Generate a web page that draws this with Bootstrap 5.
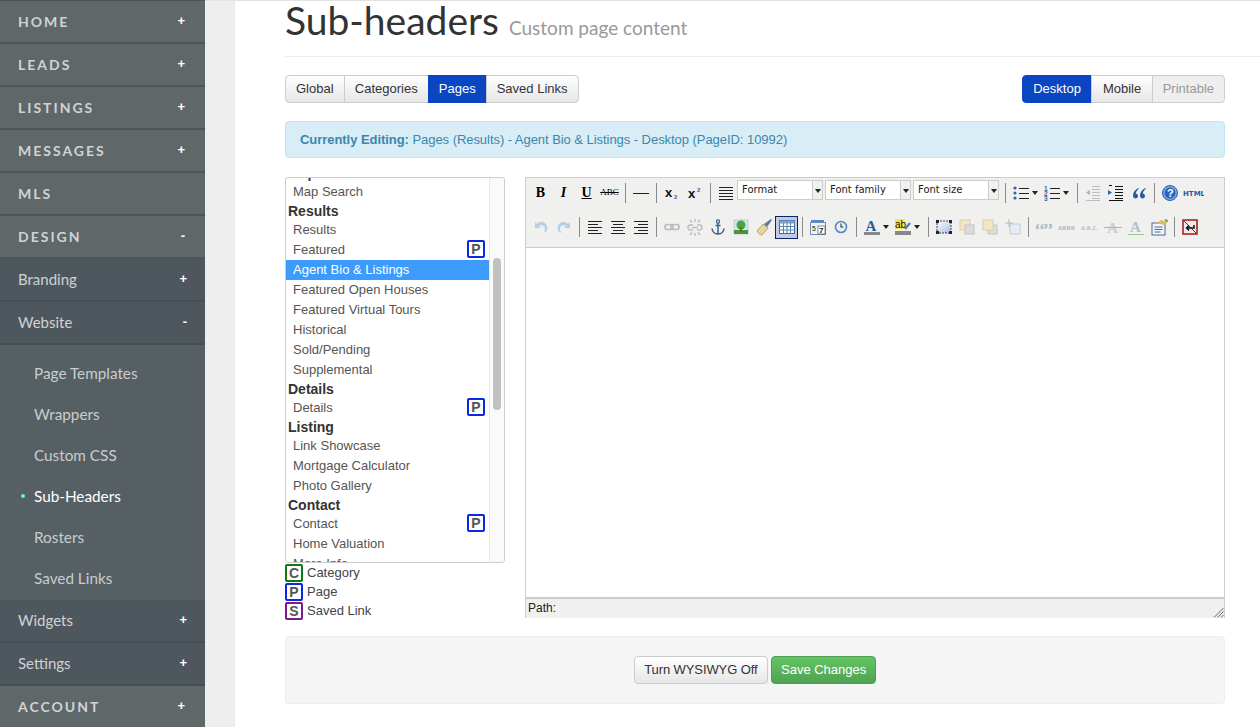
<!DOCTYPE html>
<html lang="en">
<head>
<meta charset="utf-8">
<title>Sub-headers</title>
<link href="https://cdn.jsdelivr.net/npm/bootstrap@5.3.0/dist/css/bootstrap.min.css" rel="stylesheet">
<style>
html,body{height:727px;overflow:hidden;background:#fff;}
body{font-family:"Liberation Sans",Arial,sans-serif;font-size:13px;color:#333;}
.shell{height:727px;border-top:1px solid #e3e3e3;}
.side{width:205px;flex:none;font-family:Lato,sans-serif;background:#566064;border-top:1px solid #4b5357;margin-top:-1px;}
.gutter{width:30px;flex:none;background:#eee;border-right:1px solid #e8e8e8;}
.main{flex:1 1 auto;min-width:0;padding-left:50px;}
.navtop,.navsub{height:43px;display:flex;align-items:center;justify-content:space-between;padding:0 18px;border-bottom:2px solid #4d5559;}
.navtop{background:#5f6769;color:#d0d3d4;font-weight:700;font-size:14px;letter-spacing:2px;padding-right:20px;}
.navsub{background:#4f575e;color:#cfd2d4;font-size:15px;border-bottom-color:#474e54;padding-right:18px;}
.navlast{height:41px;border-bottom:0;}
.navtop b,.navsub b{color:#fff;font-size:13px;font-weight:700;letter-spacing:0;font-family:"Liberation Sans",sans-serif;margin-top:-2px;}
.subwrap{height:255px;padding-top:8px;}
.subitem{height:41px;display:flex;align-items:center;padding-left:34px;color:#c9cdce;font-size:15.300px;position:relative;}
.subitem.on{color:#fff;}
.subitem.on::before{content:"";position:absolute;left:21px;top:18px;width:4px;height:4px;border-radius:50%;background:#5ff0f0;}
.pagehead{height:56px;border-bottom:1px solid #eee;display:flex;align-items:baseline;gap:10px;}
.pagehead h1{font-family:Lato,sans-serif;font-weight:400;font-size:39px;margin:0;line-height:39px;color:#333;}
.pagehead span{font-family:Lato,sans-serif;font-size:19px;color:#999;}
.content{padding-right:35px;}
.tabbar{margin-top:18px;}
.btn-x{font-size:13px;line-height:18px;padding:4px 10px;color:#333;background:linear-gradient(#fff,#e6e6e6);border:1px solid #ccc;border-radius:4px;height:28px;}
.btn-x:hover{color:#333;border-color:#ccc;}
.btn-x.sel{background:#0a46c2;border-color:#0a46c2;color:#fff;}
.btn-x.sel:hover{color:#fff;background:#0a46c2;border-color:#0a46c2;}
.btn-x.off{background:#eee;color:#999;opacity:1;}
.btn-x.roomy{padding-left:10.500px;padding-right:10.500px;}
.btn-x.cats{padding-left:10.200px;padding-right:10.200px;}
.btn-x.tight{padding-left:9.500px;padding-right:9.500px;letter-spacing:-.1px;}
.infobar{margin:18px 0 19px;height:37px;padding:0 14px;display:flex;align-items:center;background:#d9edf7;border:1px solid #bce8f1;border-radius:4px;color:#3a87ad;letter-spacing:-.05px;}
.workrow{gap:20px;}
.listcol{width:220px;flex:none;}
.listbox{height:386px;border:1px solid #ccc;border-radius:3px;position:relative;overflow:hidden;background:#fff;}
.listin{margin-top:-14px;width:204px;color:#555;}
.optg{height:18px;line-height:18px;font-size:14px;font-weight:700;color:#333;padding-left:2px;}
.opt{height:20px;line-height:20px;padding:0 5px 0 7px;display:flex;justify-content:space-between;align-items:center;}
.opt .tag{margin-bottom:2px;}
.opt.hit{background:#3d9bfc;color:#fff;}
.sbar{position:absolute;right:0;top:0;bottom:0;width:15px;background:#fafafa;border-left:1px solid #e8e8e8;}
.sthumb{position:absolute;left:3px;top:80px;width:8px;height:152px;border-radius:4px;background:#c1c1c1;}
.tag{width:18px;height:18px;flex:none;border:2px solid #0a28e6;border-radius:2px;font-size:14px;font-weight:700;line-height:14px;text-align:center;color:#555;}
.tag.tc{border-color:#0a7a12;}
.tag.tsv{border-color:#7a1a8c;}
.legend{height:19px;display:flex;gap:4px;align-items:center;color:#444;}
.editor{flex:1 1 auto;min-width:0;height:441px;border:1px solid #ccc;border-bottom:0;display:flex;flex-direction:column;}
.tbar{height:70px;flex:none;background:#f0f0ee;border-bottom:1px solid #ccc;padding-left:3px;}
.trow{height:29px;display:flex;align-items:center;}
.trow.second{height:40px;}
.ti{width:23px;height:22px;display:flex;align-items:center;justify-content:center;flex:none;}
.ti svg{display:block;}
.ti.act{width:23px;height:23px;background:#c2cbe0;border:1px solid #0a246a;}
.tsep{width:8px;height:20px;flex:none;display:flex;justify-content:center;}
.tsep.far{margin-left:2px;}
.tsep::before{content:"";width:1px;background:#8a8a8a;}
.tarr{width:8px;flex:none;display:flex;justify-content:center;margin-left:-1px;margin-right:1px;}
.tarr::before{content:"";border:3px solid transparent;border-top:4px solid #222;margin-top:3px;}
.tsel{width:86px;height:20px;flex:none;margin-right:2px;margin-bottom:6px;display:flex;border:1px solid #ccc;background:#fff;line-height:18px;padding-left:4px;color:#222;justify-content:space-between;font-family:"DejaVu Sans",sans-serif;font-size:10px;}
.tsel i{width:10px;background:#f0f0ee;border-left:1px solid #ccc;position:relative;flex:none;}
.tsel i::after{content:"";position:absolute;left:2px;top:8px;border:3px solid transparent;border-top:4px solid #222;}
.glyph{font-family:"Liberation Serif",serif;font-weight:700;font-size:14px;line-height:1;color:#000;}
.glyph.it{font-style:italic;}
.glyph.un{text-decoration:underline;}
.glyph.sm{font-size:9px;font-weight:400;text-decoration:line-through;}
.editarea{flex:1 1 auto;background:#fff;}
.statusbar{height:21px;flex:none;background:#f0f0ee;border-top:2px solid #ccc;font-size:12px;line-height:18px;padding-left:2px;color:#222;position:relative;}
.grip{position:absolute;right:0;bottom:0;}
.footwell{margin-top:16px;height:68px;background:#f5f5f5;border:1px solid #eee;border-radius:4px;display:flex;align-items:center;justify-content:center;gap:3px;}
.btn-save{font-size:13px;line-height:18px;padding:4px 9px;height:28px;color:#fff;background:linear-gradient(#62c462,#51a351);border:1px solid #4f9e4f;border-radius:4px;}
.btn-save:hover{color:#fff;}
</style>
</head>
<body>
<svg width="0" height="0" class="position-absolute">
<defs>
<symbol id="i-just" viewBox="0 0 20 20"><path d="M3 4.500h14M3 7.500h14M3 10.500h14M3 13.500h14M3 16.500h14" stroke="#222" fill="none"/></symbol>
<symbol id="i-left" viewBox="0 0 20 20"><path d="M3 4.500h14M3 7.500h10M3 10.500h14M3 13.500h10M3 16.500h14" stroke="#222" fill="none"/></symbol>
<symbol id="i-center" viewBox="0 0 20 20"><path d="M3 4.500h14M5 7.500h10M3 10.500h14M5 13.500h10M3 16.500h14" stroke="#222" fill="none"/></symbol>
<symbol id="i-right" viewBox="0 0 20 20"><path d="M3 4.500h14M7 7.500h10M3 10.500h14M7 13.500h10M3 16.500h14" stroke="#222" fill="none"/></symbol>
<symbol id="i-undo" viewBox="0 0 20 20"><path d="M4 5v6h6L8 9c3-2 6 0 6 3 0 2-1 3-2 4 4-1 5-4 4-7-1-4-7-6-10-2z" fill="#b9cde6"/></symbol>
<symbol id="i-redo" viewBox="0 0 20 20"><path d="M16 5v6h-6l2-2c-3-2-6 0-6 3 0 2 1 3 2 4-4-1-5-4-4-7 1-4 7-6 10-2z" fill="#b9cde6"/></symbol>
<symbol id="i-link" viewBox="0 0 20 20"><rect x="3" y="7.500" width="8" height="5" rx="2.500" fill="none" stroke="#b4bcc4" stroke-width="1.600"/><rect x="9" y="7.500" width="8" height="5" rx="2.500" fill="none" stroke="#b4bcc4" stroke-width="1.600"/></symbol>
<symbol id="i-unlink" viewBox="0 0 20 20"><path d="M8 8H5.500a2.500 2.500 0 0 0 0 5H8M12 8h2.500a2.500 2.500 0 0 1 0 5H12M7 10.500h6M10 2v3M10 16v3M5 3l2 2.500M15 3l-2 2.500M5 18l2-2.500M15 18l-2-2.500" fill="none" stroke="#b4bcc4" stroke-width="1.400"/></symbol>
<symbol id="i-anchor" viewBox="0 0 20 20"><circle cx="10" cy="4.500" r="1.600" fill="none" stroke="#3a6288" stroke-width="1.200"/><path d="M10 6v11M7.500 8.500h5M4 11.500c.5 3.500 3 5.500 6 5.500s5.500-2 6-5.500" fill="none" stroke="#3a6288" stroke-width="1.500"/></symbol>
<symbol id="i-img" viewBox="0 0 20 20"><rect x="3" y="3" width="14" height="14" fill="#cfe8f8" stroke="#9ab" stroke-width=".5"/><rect x="3" y="13" width="14" height="4" fill="#3f9a3a"/><circle cx="10" cy="8" r="4.500" fill="#4aa53e"/><rect x="9.200" y="10" width="1.600" height="5" fill="#8a5020"/><circle cx="7" cy="14.500" r="1" fill="#e05a4a"/></symbol>
<symbol id="i-clean" viewBox="0 0 20 20"><path d="M3 14l6-7 5 4-6 7c-2 0-4-2-5-4z" fill="#e8d79a" stroke="#a08a4a" stroke-width=".7"/><path d="M10 7l7-5 1 1-5 7z" fill="#5a7aa0"/></symbol>
<symbol id="i-table" viewBox="0 0 20 20"><rect x="2.500" y="3.500" width="15" height="13" fill="#fff" stroke="#3f6aa0"/><rect x="2.500" y="3.500" width="15" height="3" fill="#7f9fc8"/><path d="M2.500 9.500h15M2.500 13h15M6.500 6v10M10 6v10M13.500 6v10" stroke="#5a84b8" fill="none"/></symbol>
<symbol id="i-date" viewBox="0 0 20 20"><rect x="3" y="3" width="13" height="4" fill="#5b87c0"/><rect x="2.500" y="5.500" width="15" height="12" fill="#eef3fa" stroke="#6a8fbd"/><rect x="10" y="9" width="7" height="8" fill="#fff" stroke="#444" stroke-width=".6"/><text x="11" y="16" font-size="8" font-weight="700" fill="#222" font-family="Liberation Sans">7</text><text x="4" y="14" font-size="7" fill="#222" font-family="Liberation Sans">5</text></symbol>
<symbol id="i-time" viewBox="0 0 20 20"><circle cx="10" cy="10" r="5.500" fill="#e8f0fa" stroke="#5a86bc" stroke-width="1.600"/><path d="M10 6.500v3.500h2.500" fill="none" stroke="#334" stroke-width="1.100"/></symbol>
<symbol id="i-box" viewBox="0 0 20 20"><defs><linearGradient id="g1" x1="0" y1="0" x2="1" y2="1"><stop offset="0" stop-color="#fff"/><stop offset="1" stop-color="#a8bde0"/></linearGradient></defs><rect x="3" y="4" width="14" height="12" fill="url(#g1)" stroke="#345" stroke-dasharray="2 1"/><path d="M2 3h3v3H2zM15 3h3v3h-3zM2 14h3v3H2zM15 14h3v3h-3z" fill="#223"/></symbol>
<symbol id="i-layer" viewBox="0 0 20 20"><rect x="3" y="3" width="10" height="10" fill="#f2e7c4" stroke="#d8cda8"/><rect x="8" y="8" width="9" height="9" fill="#dcdcdc" stroke="#c4c4c4"/></symbol>
<symbol id="i-layer2" viewBox="0 0 20 20"><rect x="8" y="8" width="9" height="9" fill="#dcdcdc" stroke="#c4c4c4"/><rect x="3" y="3" width="10" height="10" fill="#f2e7c4" stroke="#d8cda8"/></symbol>
<symbol id="i-abs" viewBox="0 0 20 20"><rect x="7" y="7" width="10" height="10" fill="#e4ecf4" stroke="#c2ccd6"/><path d="M6 2v8M2 6h8" stroke="#b8b8b8" fill="none"/></symbol>
<symbol id="i-attr" viewBox="0 0 20 20"><rect x="3" y="6" width="13" height="12" fill="#f2f6fb" stroke="#4a6d94"/><path d="M5.500 10h8M5.500 12.500h8M5.500 15h6" stroke="#4a6d94" fill="none"/><path d="M8 6l4-3 6 2-3 3z" fill="#e4bb52"/><path d="M15 2l4 1-1 3z" fill="#4aa53e"/></symbol>
<symbol id="i-nbsp" viewBox="0 0 20 20"><rect x="3" y="3" width="14" height="14" fill="#f4e8e8" stroke="#a01818" stroke-width="1.500"/><path d="M4 4l12 12" stroke="#a01818" fill="none"/><path d="M14 8v3H7M9 8.500L6.500 11 9 13.500" stroke="#111" stroke-width="1.500" fill="none"/></symbol>
<symbol id="i-help" viewBox="0 0 20 20"><circle cx="10" cy="10" r="7.500" fill="#7aa8e8" stroke="#2a5ea8"/><circle cx="10" cy="10" r="5.500" fill="#2a64c0"/><text x="7" y="14" font-size="11" font-weight="700" fill="#fff" font-family="Liberation Sans">?</text></symbol>
<symbol id="i-ul" viewBox="0 0 20 20"><path d="M8 5.500h10M8 10.500h10M8 15.500h10" stroke="#222" fill="none"/><circle cx="4" cy="5" r="1.600" fill="#3a62a8"/><circle cx="4" cy="10" r="1.600" fill="#3a62a8"/><circle cx="4" cy="15" r="1.600" fill="#3a62a8"/></symbol>
<symbol id="i-ol" viewBox="0 0 20 20"><path d="M8 5.500h10M8 10.500h10M8 15.500h10" stroke="#222" fill="none"/><text x="2" y="8" font-size="6.500" font-weight="700" fill="#3a62a8" font-family="Liberation Sans">1</text><text x="2" y="13" font-size="6.500" font-weight="700" fill="#3a62a8" font-family="Liberation Sans">2</text><text x="2" y="18" font-size="6.500" font-weight="700" fill="#3a62a8" font-family="Liberation Sans">3</text></symbol>
<symbol id="i-out" viewBox="0 0 20 20"><path d="M9 3.500h8M9 6.500h8M9 9.500h8M9 12.500h8M9 15.500h8M3 17.500h14" stroke="#b8bec4" fill="none"/><path d="M7 7L3 9.500 7 12z" fill="#9cb4d0"/></symbol>
<symbol id="i-ind" viewBox="0 0 20 20"><path d="M9 3.500h8M9 6.500h8M9 9.500h8M9 12.500h8M9 15.500h8M3 17.500h14M3 2.500h3" stroke="#111" fill="none"/><path d="M2 7l4 2.500L2 12z" fill="#2a62b0"/></symbol>
<symbol id="i-quote" viewBox="0 0 20 20"><path d="M9.500 5C6.500 6.500 4 9 4 12.500 4 14.500 5.200 15.500 6.500 15.500S9 14.500 9 13s-1-2.500-2.300-2.500c.3-1.800 1.500-3.500 3.300-4.700zM16.500 5c-3 1.500-5.500 4-5.500 7.500 0 2 1.200 3 2.500 3s2.500-1 2.500-2.500-1-2.500-2.300-2.500c.3-1.800 1.500-3.500 3.300-4.700z" fill="#2a5aa0"/></symbol>
<symbol id="i-cite" viewBox="0 0 20 20"><path d="M2 12V9.500C2 8 3 7 5 7v1.500c-.8 0-1 .4-1 1H5V12zM6.500 12V9.500C6.500 8 7.500 7 9.500 7v1.500c-.8 0-1 .4-1 1h1V12zM10.500 7h3v2.500c0 1.500-1 2.500-3 2.500v-1.500c.8 0 1-.4 1-1h-1zM15 7h3v2.500c0 1.500-1 2.500-3 2.500v-1.500c.8 0 1-.4 1-1h-1z" fill="#b4bfcf"/></symbol>
</defs>
</svg>
<div class="shell d-flex">
  <nav class="side">
    <div class="navtop"><span>HOME</span><b>+</b></div>
    <div class="navtop"><span>LEADS</span><b>+</b></div>
    <div class="navtop"><span>LISTINGS</span><b>+</b></div>
    <div class="navtop"><span>MESSAGES</span><b>+</b></div>
    <div class="navtop"><span>MLS</span></div>
    <div class="navtop"><span>DESIGN</span><b>-</b></div>
    <div class="navsub"><span>Branding</span><b>+</b></div>
    <div class="navsub"><span>Website</span><b>-</b></div>
    <div class="subwrap">
      <div class="subitem">Page Templates</div>
      <div class="subitem">Wrappers</div>
      <div class="subitem">Custom CSS</div>
      <div class="subitem on">Sub-Headers</div>
      <div class="subitem">Rosters</div>
      <div class="subitem">Saved Links</div>
    </div>
    <div class="navsub"><span>Widgets</span><b>+</b></div>
    <div class="navsub"><span>Settings</span><b>+</b></div>
    <div class="navtop navlast"><span>ACCOUNT</span><b>+</b></div>
  </nav>
  <div class="gutter"></div>
  <main class="main">
    <div class="pagehead"><h1>Sub-headers</h1><span>Custom page content</span></div>
    <div class="content">
      <div class="tabbar d-flex justify-content-between">
        <div class="btn-group">
          <button type="button" class="btn btn-x">Global</button>
          <button type="button" class="btn btn-x cats">Categories</button>
          <button type="button" class="btn btn-x sel">Pages</button>
          <button type="button" class="btn btn-x">Saved Links</button>
        </div>
        <div class="btn-group">
          <button type="button" class="btn btn-x sel roomy">Desktop</button>
          <button type="button" class="btn btn-x roomy">Mobile</button>
          <button type="button" class="btn btn-x off">Printable</button>
        </div>
      </div>
      <div class="infobar"><span><strong>Currently Editing:</strong> Pages (Results) - Agent Bio &amp; Listings - Desktop (PageID: 10992)</span></div>
      <div class="d-flex workrow">
        <div class="listcol">
          <div class="listbox">
            <div class="listin">
              <div class="optg">Map</div>
              <div class="opt">Map Search</div>
              <div class="optg">Results</div>
              <div class="opt">Results</div>
              <div class="opt">Featured<span class="tag">P</span></div>
              <div class="opt hit">Agent Bio &amp; Listings</div>
              <div class="opt">Featured Open Houses</div>
              <div class="opt">Featured Virtual Tours</div>
              <div class="opt">Historical</div>
              <div class="opt">Sold/Pending</div>
              <div class="opt">Supplemental</div>
              <div class="optg">Details</div>
              <div class="opt">Details<span class="tag">P</span></div>
              <div class="optg">Listing</div>
              <div class="opt">Link Showcase</div>
              <div class="opt">Mortgage Calculator</div>
              <div class="opt">Photo Gallery</div>
              <div class="optg">Contact</div>
              <div class="opt">Contact<span class="tag">P</span></div>
              <div class="opt">Home Valuation</div>
              <div class="opt">More Info</div>
            </div>
            <div class="sbar"><div class="sthumb"></div></div>
          </div>
          <div>
            <div class="legend"><span class="tag tc">C</span>Category</div>
            <div class="legend"><span class="tag">P</span>Page</div>
            <div class="legend"><span class="tag tsv">S</span>Saved Link</div>
          </div>
        </div>
        <div class="editor">
          <div class="tbar">
            <div class="trow">
              <span class="ti"><span class="glyph">B</span></span>
              <span class="ti"><span class="glyph it">I</span></span>
              <span class="ti"><span class="glyph un">U</span></span>
              <span class="ti"><span class="glyph sm">ABC</span></span>
              <span class="tsep"></span>
              <span class="ti"><svg width="20" height="20"><path d="M2 10.500h16" stroke="#222" fill="none"/></svg></span>
              <span class="tsep"></span>
              <span class="ti"><svg width="20" height="20"><text x="3" y="14" font-size="13" font-weight="700" fill="#111" font-family="Liberation Sans">x</text><text x="12" y="16" font-size="6" font-weight="700" fill="#3a62a8" font-family="Liberation Sans">2</text></svg></span>
              <span class="ti"><svg width="20" height="20"><text x="3" y="15" font-size="13" font-weight="700" fill="#111" font-family="Liberation Sans">x</text><text x="12" y="9" font-size="6" font-weight="700" fill="#3a62a8" font-family="Liberation Sans">2</text></svg></span>
              <span class="tsep"></span>
              <span class="ti"><svg width="20" height="20"><use href="#i-just"/></svg></span>
              <span class="tsel">Format<i></i></span>
              <span class="tsel">Font family<i></i></span>
              <span class="tsel">Font size<i></i></span>
              <span class="tsep"></span>
              <span class="ti"><svg width="20" height="20"><use href="#i-ul"/></svg></span>
              <span class="tarr"></span>
              <span class="ti"><svg width="20" height="20"><use href="#i-ol"/></svg></span>
              <span class="tarr"></span>
              <span class="tsep far"></span>
              <span class="ti"><svg width="20" height="20"><use href="#i-out"/></svg></span>
              <span class="ti"><svg width="20" height="20"><use href="#i-ind"/></svg></span>
              <span class="ti"><svg width="20" height="20"><use href="#i-quote"/></svg></span>
              <span class="tsep"></span>
              <span class="ti"><svg width="20" height="20"><use href="#i-help"/></svg></span>
              <span class="ti"><svg width="22" height="20"><text x="1" y="13" font-size="7" font-weight="700" fill="#2a5aa0" font-family="DejaVu Sans">HTML</text></svg></span>
            </div>
            <div class="trow second">
              <span class="ti"><svg width="20" height="20"><use href="#i-undo"/></svg></span>
              <span class="ti"><svg width="20" height="20"><use href="#i-redo"/></svg></span>
              <span class="tsep"></span>
              <span class="ti"><svg width="20" height="20"><use href="#i-left"/></svg></span>
              <span class="ti"><svg width="20" height="20"><use href="#i-center"/></svg></span>
              <span class="ti"><svg width="20" height="20"><use href="#i-right"/></svg></span>
              <span class="tsep"></span>
              <span class="ti"><svg width="20" height="20"><use href="#i-link"/></svg></span>
              <span class="ti"><svg width="20" height="20"><use href="#i-unlink"/></svg></span>
              <span class="ti"><svg width="20" height="20"><use href="#i-anchor"/></svg></span>
              <span class="ti"><svg width="20" height="20"><use href="#i-img"/></svg></span>
              <span class="ti"><svg width="20" height="20"><use href="#i-clean"/></svg></span>
              <span class="ti act"><svg width="20" height="20"><use href="#i-table"/></svg></span>
              <span class="tsep"></span>
              <span class="ti"><svg width="20" height="20"><use href="#i-date"/></svg></span>
              <span class="ti"><svg width="20" height="20"><use href="#i-time"/></svg></span>
              <span class="tsep"></span>
              <span class="ti"><svg width="20" height="20"><text x="3.500" y="14" font-size="15" font-weight="700" fill="#2a5aa0" font-family="Liberation Serif">A</text><rect x="2" y="15" width="16" height="3" fill="#888"/></svg></span>
              <span class="tarr"></span>
              <span class="ti"><svg width="20" height="20"><rect x="2" y="2" width="10" height="10" fill="#f4e84a"/><text x="2" y="11" font-size="10" fill="#111" font-family="Liberation Sans">ab</text><path d="M12 12l5-6" stroke="#4a78b4" stroke-width="2" fill="none"/><rect x="2" y="14" width="16" height="4" fill="#888"/></svg></span>
              <span class="tarr"></span>
              <span class="tsep far"></span>
              <span class="ti"><svg width="20" height="20"><use href="#i-box"/></svg></span>
              <span class="ti"><svg width="20" height="20"><use href="#i-layer"/></svg></span>
              <span class="ti"><svg width="20" height="20"><use href="#i-layer2"/></svg></span>
              <span class="ti"><svg width="20" height="20"><use href="#i-abs"/></svg></span>
              <span class="tsep"></span>
              <span class="ti"><svg width="20" height="20"><use href="#i-cite"/></svg></span>
              <span class="ti"><svg width="20" height="20"><text x="1" y="13" font-size="5.500" font-weight="700" fill="#b4bfcf" font-family="DejaVu Sans">ABBR</text></svg></span>
              <span class="ti"><svg width="20" height="20"><text x="1" y="13" font-size="5" font-weight="700" fill="#b4bfcf" font-family="DejaVu Sans">A.B.C.</text></svg></span>
              <span class="ti"><svg width="20" height="20"><text x="4" y="16" font-size="15" font-weight="700" fill="#c6ccd4" font-family="Liberation Serif">A</text><path d="M1 10.500h18" stroke="#e49a9a" fill="none"/></svg></span>
              <span class="ti"><svg width="20" height="20"><text x="4" y="15" font-size="15" font-weight="700" fill="#b4bfcf" font-family="Liberation Serif">A</text><path d="M2 17.500h16" stroke="#8ccf8c" fill="none"/></svg></span>
              <span class="ti"><svg width="20" height="20"><use href="#i-attr"/></svg></span>
              <span class="tsep"></span>
              <span class="ti"><svg width="20" height="20"><use href="#i-nbsp"/></svg></span>
            </div>
          </div>
          <div class="editarea"></div>
          <div class="statusbar">Path:
            <svg class="grip" width="12" height="12"><path d="M11.500 2L2 11.500M11.500 5.500L5.500 11.500M11.500 9L9 11.500" stroke="#666" fill="none"/></svg>
          </div>
        </div>
      </div>
      <div class="footwell">
        <button type="button" class="btn btn-x tight">Turn WYSIWYG Off</button>
        <button type="button" class="btn btn-save">Save Changes</button>
      </div>
    </div>
  </main>
</div>
<script src="https://cdn.jsdelivr.net/npm/bootstrap@5.3.0/dist/js/bootstrap.bundle.min.js"></script>
</body>
</html>
